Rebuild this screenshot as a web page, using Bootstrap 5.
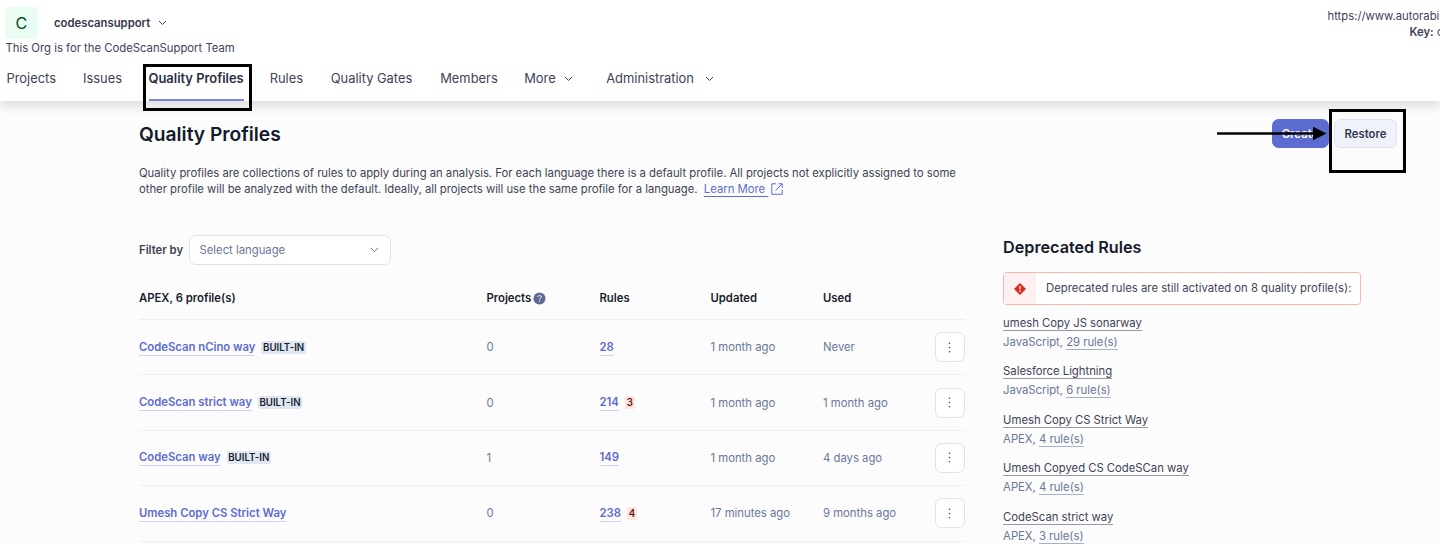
<!DOCTYPE html>
<html lang="en">
<head>
<meta charset="utf-8">
<meta name="viewport" content="width=device-width, initial-scale=1">
<title>Quality Profiles</title>
<link href="https://cdn.jsdelivr.net/npm/bootstrap@5.3.0/dist/css/bootstrap.min.css" rel="stylesheet">
<style>
html,body{height:544px;overflow:hidden}
body{font-family:Inter,"Liberation Sans",sans-serif;font-size:11.3px;line-height:16.1px;color:#3e4357;background:#fcfcfc}
svg{display:block;flex:none}
.topbar{height:101px;background:#fff;box-shadow:0 3px 10px 2px rgba(30,32,50,.14)}
.org-head{height:39px}
.org-row{padding:7px 0 0 5px}
.org-mark{width:33px;height:32px;background:#eafdf3;color:#004d28;font-size:16.1px;border-radius:3px}
.org-name{font-weight:600;margin-left:16px;padding-top:1px;color:#333850}
.org-desc{padding-left:5.5px;line-height:18px}
.org-side{width:112.5px;margin-top:8px;white-space:nowrap}
.key-line{padding-left:82px}
.main-nav{font-size:12.9px;line-height:20px;color:#3e4357;padding-left:6.5px;margin-top:-1px}
.main-nav .tab{padding:1px 0 0;height:33px;margin-top:12px;white-space:nowrap;color:inherit}
.main-nav .tab.active{font-weight:600;border-bottom:2px solid #7b87d9;color:#2a2f44}
.frame-box{position:absolute;border:3px solid #000;z-index:3}
.page{padding-left:139px;width:1361px}
.page-head{height:66px;padding-top:18px}
h1{font-size:19.2px;line-height:30px;font-weight:600;color:#151b2c;margin:0}
h2{font-size:16.2px;line-height:22px;font-weight:600;color:#151b2c;margin:1px 0 0}
.act{height:29px;border-radius:6.5px;font-size:11.3px;font-weight:600;line-height:16px;padding:0;border:1px solid #dde2f3}
.act-create{background:#5d6cd0;border-color:#5d6cd0;color:#fff;width:57px}
.act-restore{background:#eff2f9;color:#333850;width:63px;margin-left:5.5px;margin-right:-36px}
.intro{width:840px;height:70.5px;margin:-2.5px 0 0;white-space:nowrap;letter-spacing:-.018px}
.intro a{color:#5d6cd0;text-decoration:underline;text-underline-offset:2.5px}
.filter-label{font-weight:600;width:50px}
.picker{width:202px;height:30px;border:1px solid #dde2f3;border-radius:6.5px;background:#fff;color:#69779b;padding:0 11px 0 9.5px}
.left-col{width:826px}
.right-col{width:358px;margin-left:38.3px}
.profiles{display:grid;grid-template-columns:347.5px 113px 111px 112.5px 111.5px 30px}
.head-row{height:43px;margin-top:12px;font-weight:600;color:#1a1e2d;border-bottom:1px solid #efeff1}
.data-row{height:55.4px;border-bottom:1px solid #efeff1;color:#69779b}
.plink{font-weight:600;color:#5d6cd0;text-decoration:none;border-bottom:1px solid #cbd1f8;line-height:16px;display:inline-block}
.tagx,.depx{display:inline-block;font-weight:600;font-size:9.7px;line-height:13px;border-radius:2px;margin-left:6px}
.tagx{background:#e1e6f3;color:#1a1e2d;padding:0 1.6px}
.depx{background:#ffe3e1;color:#68120d;padding:0 1.8px}
.kebab{width:30px;height:30px;border:1px solid #dde2f3;border-radius:6.5px;background:#fff;padding:0}
.warn{height:33px;margin:14px 0 9px;border:1px solid #fab5ad;border-radius:3.5px;background:#fff;white-space:nowrap}
.warn-ico{width:32px;background:#fef0f0}
.dep-item{height:48.4px;padding-top:1px;letter-spacing:-.01px}
.dep-item a{text-decoration:none;display:inline-block;line-height:14px;color:#3e4357;border-bottom:1px solid #9497a5}
.dep-item .sub{color:#69779b;margin-top:3px}
.dep-item .sub a{color:#69779b;border-color:#a6b0cb}
.pointer{position:absolute;left:1217px;top:126px;z-index:4}
</style>
</head>
<body class="position-relative">
<header class="topbar position-relative">
  <div class="org-head d-flex justify-content-between">
    <div class="org-row d-flex align-items-center">
      <div class="org-mark d-flex align-items-center justify-content-center">C</div>
      <span class="org-name">codescansupport</span>
      <svg class="ms-2" width="9" height="6" viewBox="0 0 9 6" fill="none" stroke="#3e4357"><path d="M1 1l3.5 3.5L8 1"/></svg>
    </div>
    <div class="org-side">
      <div>https://www.autorabi</div>
      <div class="key-line"><b class="fw-semibold">Key:</b> c</div>
    </div>
  </div>
  <div class="org-desc">This Org is for the CodeScanSupport Team</div>
  <nav class="main-nav d-flex">
    <a class="tab nav-link" style="width:76.5px">Projects</a>
    <a class="tab nav-link" style="width:65.5px">Issues</a>
    <a class="tab nav-link active">Quality Profiles</a>
    <a class="tab nav-link" style="width:61px;margin-left:26px">Rules</a>
    <a class="tab nav-link" style="width:109.5px">Quality Gates</a>
    <a class="tab nav-link" style="width:84px">Members</a>
    <a class="tab nav-link d-flex" style="width:82px">More<svg style="margin:7px 0 0 8px" width="9" height="6" viewBox="0 0 9 6" fill="none" stroke="#3e4357"><path d="M1 1l3.5 3.5L8 1"/></svg></a>
    <a class="tab nav-link d-flex">Administration<svg style="margin:7px 0 0 11px" width="9" height="6" viewBox="0 0 9 6" fill="none" stroke="#3e4357"><path d="M1 1l3.5 3.5L8 1"/></svg></a>
  </nav>
</header>
<main class="page">
  <div class="page-head d-flex justify-content-between align-items-start">
    <h1>Quality Profiles</h1>
    <div class="d-flex"><button class="btn act act-create">Create</button><button class="btn act act-restore">Restore</button></div>
  </div>
  <p class="intro">Quality profiles are collections of rules to apply during an analysis. For each language there is a default profile. All projects not explicitly assigned to some<br>other profile will be analyzed with the default. Ideally, all projects will use the same profile for a language.&nbsp; <a href="#">Learn More&nbsp;</a><svg class="d-inline-block align-top" style="margin:2px 0 0 2.5px" width="12" height="12" viewBox="0 0 12 12" fill="none" stroke="#5d6cd0"><path d="M5 .8H.8v10.5h10.4V7M7.3.8h4v4M11 1L4.6 7.5"/></svg></p>
  <div class="d-flex">
    <section class="left-col">
      <div class="d-flex align-items-center"><span class="filter-label">Filter by</span>
        <div class="picker d-flex align-items-center justify-content-between">Select language<svg width="9" height="6" viewBox="0 0 9 6" fill="none" stroke="#69779b"><path d="M1 1l3.5 3.5L8 1"/></svg></div>
      </div>
      <div class="profiles head-row align-items-center">
        <span>APEX, 6 profile(s)</span>
        <span class="d-flex align-items-center">Projects<svg style="margin-left:2px" width="13" height="13" viewBox="0 0 13 13"><circle cx="6.5" cy="6.5" r="6" fill="#5c6a93"/><path d="M4.8 5.1c0-2.2 3.5-2.1 3.5 0 0 1.3-1.7 1.3-1.7 2.6M6.6 8.8v1.2" fill="none" stroke="#fff"/></svg></span>
        <span>Rules</span><span>Updated</span><span>Used</span><span></span>
      </div>
      <div class="profiles data-row align-items-center">
        <span><a class="plink">CodeScan nCino way</a><span class="tagx">BUILT-IN</span></span><span>0</span><span><a class="plink">28</a></span><span>1 month ago</span><span>Never</span>
        <button class="btn kebab d-flex align-items-center justify-content-center"><svg width="3" height="11" viewBox="0 0 3 11" fill="#3e4357"><circle cx="1.5" cy="1.2" r=".8"/><circle cx="1.5" cy="5.5" r=".8"/><circle cx="1.5" cy="9.8" r=".8"/></svg></button>
      </div>
      <div class="profiles data-row align-items-center">
        <span><a class="plink">CodeScan strict way</a><span class="tagx">BUILT-IN</span></span><span>0</span><span><a class="plink">214</a><span class="depx">3</span></span><span>1 month ago</span><span>1 month ago</span>
        <button class="btn kebab d-flex align-items-center justify-content-center"><svg width="3" height="11" viewBox="0 0 3 11" fill="#3e4357"><circle cx="1.5" cy="1.2" r=".8"/><circle cx="1.5" cy="5.5" r=".8"/><circle cx="1.5" cy="9.8" r=".8"/></svg></button>
      </div>
      <div class="profiles data-row align-items-center">
        <span><a class="plink">CodeScan way</a><span class="tagx">BUILT-IN</span></span><span>1</span><span><a class="plink">149</a></span><span>1 month ago</span><span>4 days ago</span>
        <button class="btn kebab d-flex align-items-center justify-content-center"><svg width="3" height="11" viewBox="0 0 3 11" fill="#3e4357"><circle cx="1.5" cy="1.2" r=".8"/><circle cx="1.5" cy="5.5" r=".8"/><circle cx="1.5" cy="9.8" r=".8"/></svg></button>
      </div>
      <div class="profiles data-row align-items-center">
        <span><a class="plink">Umesh Copy CS Strict Way</a></span><span>0</span><span><a class="plink">238</a><span class="depx">4</span></span><span>17 minutes ago</span><span>9 months ago</span>
        <button class="btn kebab d-flex align-items-center justify-content-center"><svg width="3" height="11" viewBox="0 0 3 11" fill="#3e4357"><circle cx="1.5" cy="1.2" r=".8"/><circle cx="1.5" cy="5.5" r=".8"/><circle cx="1.5" cy="9.8" r=".8"/></svg></button>
      </div>
    </section>
    <aside class="right-col">
      <h2>Deprecated Rules</h2>
      <div class="warn d-flex">
        <div class="warn-ico d-flex align-items-center justify-content-center"><svg width="12" height="12" viewBox="0 0 12 12"><path d="M6 .3L11.7 6 6 11.7.3 6z" fill="#d92d20" stroke="#d92d20" stroke-width=".5" stroke-linejoin="round"/><path d="M6 3v3.6M6 7.6V9" stroke="#fff" stroke-width="1.2"/></svg></div>
        <div class="d-flex align-items-center" style="padding-left:10px">Deprecated rules are still activated on 8 quality profile(s):</div>
      </div>
      <div class="dep-item"><a href="#">umesh Copy JS sonarway</a><div class="sub">JavaScript, <a href="#">29 rule(s)</a></div></div>
      <div class="dep-item"><a href="#">Salesforce Lightning</a><div class="sub">JavaScript, <a href="#">6 rule(s)</a></div></div>
      <div class="dep-item"><a href="#">Umesh Copy CS Strict Way</a><div class="sub">APEX, <a href="#">4 rule(s)</a></div></div>
      <div class="dep-item"><a href="#">Umesh Copyed CS CodeSCan way</a><div class="sub">APEX, <a href="#">4 rule(s)</a></div></div>
      <div class="dep-item"><a href="#">CodeScan strict way</a><div class="sub">APEX, <a href="#">3 rule(s)</a></div></div>
    </aside>
  </div>
</main>
<!-- callouts drawn over the page -->
<div class="frame-box" style="left:143px;top:64px;width:109px;height:47px"></div>
<div class="frame-box" style="left:1329px;top:109px;width:77px;height:64px"></div>
<svg class="pointer" width="110" height="15" viewBox="0 0 110 15"><path d="M0 7.5h98" stroke="#000" stroke-width="2.6"/><path d="M96 .8l13.5 6.7L96 14.2z"/></svg>
<script src="https://cdn.jsdelivr.net/npm/bootstrap@5.3.0/dist/js/bootstrap.bundle.min.js"></script>
</body>
</html>
